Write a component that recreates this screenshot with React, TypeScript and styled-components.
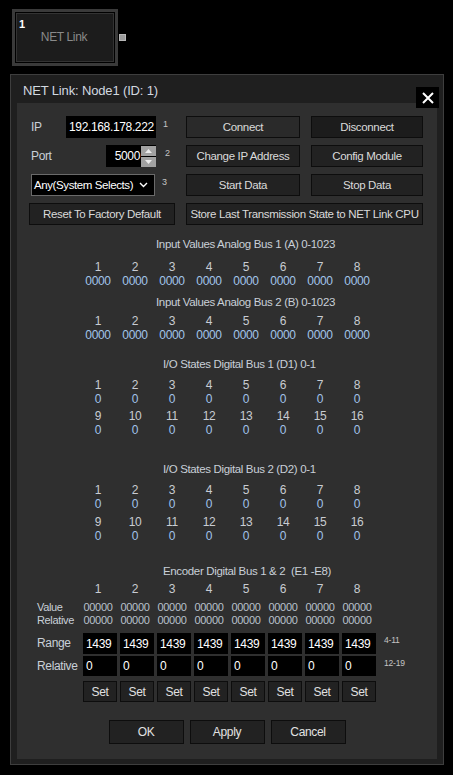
import React from "react";
import styled, { createGlobalStyle } from "styled-components";

// no narrow face is installed, so Liberation Sans is tightened a little
const font = `"Liberation Sans", Arial, sans-serif`;

const GlobalStyle = createGlobalStyle`
  html, body {
    margin: 0;
    padding: 0;
    background: #000;
  }
  body {
    font-family: ${font};
    font-size: 11.5px;
    letter-spacing: -0.35px;
    color: #d6d6d6;
  }
  * {
    box-sizing: border-box;
  }
`;

const Page = styled.div`
  width: 453px;
  height: 775px;
  padding: 9px 0 0 10px;
  background: #000;
  overflow: hidden;
`;

// node on the canvas
const NodeRow = styled.div`
  display: flex;
  align-items: center;
  margin-left: 2px;
`;

const NodeBox = styled.div`
  width: 106px;
  height: 57px;
  border: 3px solid #3a3a3a;
  background: #1c1c1c;
  box-shadow: inset 0 0 0 1px #000, inset 0 0 0 2px #333;
  display: flex;
  flex-direction: column;
  padding: 6px 0 0 4px;
`;

const NodeIndex = styled.div`
  font-weight: bold;
  font-size: 11px;
  line-height: 12px;
  letter-spacing: 0;
  color: #fff;
`;

const NodeName = styled.div`
  text-align: center;
  font-size: 12px;
  line-height: 14px;
  color: #8a8a8a;
  padding-right: 6px;
`;

const PortDot = styled.div`
  width: 7px;
  height: 7px;
  margin-left: 1px;
  background: #9c9c9c;
  border: 1px solid #b8b8b8;
`;

// dialog
const Dialog = styled.div`
  position: relative;
  width: 434px;
  height: 691px;
  margin-top: 8px;
  border: 1px solid #3e3e3e;
  background: #1f1f1f;
  padding: 0 6px 5px 6px;
`;

const TitleBar = styled.div`
  height: 28px;
  display: flex;
  align-items: center;
  padding: 3px 0 0 6px;
  font-size: 13px;
  letter-spacing: -0.15px;
  color: #d2d9e0;
`;

const CloseButton = styled.div`
  position: absolute;
  top: 12px;
  right: 4px;
  width: 23px;
  height: 21px;
  background: #000;
  display: flex;
  align-items: center;
  justify-content: center;
`;

const Panel = styled.div`
  height: 656px;
  background: #2f2f2f;
  padding-top: 13px;
`;

const ControlGrid = styled.div`
  display: grid;
  grid-template-columns: 146px 114px 112px;
  grid-auto-rows: 22px;
  column-gap: 11px;
  row-gap: 7px;
  padding-left: 12px;
`;

const Button = styled.button<{ $span?: number; $tone?: string }>`
  grid-column: span ${(p) => p.$span ?? 1};
  background: ${(p) => p.$tone ?? "#222"};
  border: 1px solid #0d0d0d;
  color: #dadada;
  font: inherit;
  letter-spacing: inherit;
  padding: 0;
  margin: 0;
  white-space: nowrap;
`;

const FieldRow = styled.div`
  display: flex;
  align-items: center;
  padding-left: 2px;
`;

const FieldLabel = styled.span`
  flex: 1;
  font-size: 12px;
  color: #c9d0d8;
`;

const TextBox = styled.div<{ $w: number; $align?: string }>`
  width: ${(p) => p.$w}px;
  height: 22px;
  background: #000;
  color: #fff;
  display: flex;
  align-items: center;
  justify-content: ${(p) => p.$align ?? "flex-start"};
  padding: 0 3px;
  font-size: 12px;
  white-space: nowrap;
`;

const SpinBox = styled.div`
  display: flex;
  flex-direction: column;
  gap: 1px;
  margin-left: 1px;
  margin-right: -3px;
`;

const SpinHalf = styled.div`
  width: 15px;
  height: 10px;
  background: #a2a2a2;
  display: flex;
  align-items: center;
  justify-content: center;
`;

const Sup = styled.span<{ $pad?: number }>`
  width: 19px;
  align-self: flex-start;
  margin-top: 3px;
  padding-left: ${(p) => p.$pad ?? 7}px;
  font-size: 9px;
  line-height: 10px;
  letter-spacing: 0;
  color: #c4c4c4;
`;

const Dropdown = styled.div`
  width: 124px;
  height: 22px;
  border: 1px solid #6a6a6a;
  background: #000;
  display: flex;
  align-items: center;
  justify-content: space-between;
  padding: 0 6px 0 2px;
  color: #fff;
  font-size: 11.5px;
  letter-spacing: -0.4px;
  white-space: nowrap;
`;

// readout sections
const SectionTitle = styled.div<{ $top: number; $indent: number }>`
  margin-top: ${(p) => p.$top}px;
  padding-left: ${(p) => p.$indent}px;
  height: 15px;
  line-height: 15px;
  color: #c9d0d8;
  white-space: pre;
`;

const CellGrid = styled.div<{ $top?: number; $left?: number }>`
  display: grid;
  grid-template-columns: repeat(8, 34px);
  column-gap: 3px;
  margin-top: ${(p) => p.$top ?? 0}px;
  margin-left: ${(p) => p.$left ?? 0}px;
`;

const Cell = styled.div<{ $kind: "num" | "val" | "enc" }>`
  text-align: center;
  line-height: ${(p) => (p.$kind === "enc" ? 12.5 : 14)}px;
  height: ${(p) => (p.$kind === "enc" ? 12.5 : 14)}px;
  font-size: ${(p) => (p.$kind === "enc" ? 11 : 12)}px;
  color: ${(p) =>
    p.$kind === "num" ? "#c8ccd2" : p.$kind === "val" ? "#a2c4ea" : "#b9c1cc"};
`;

const EncRow = styled.div<{ $top: number }>`
  display: flex;
  align-items: flex-start;
  margin-top: ${(p) => p.$top}px;
  padding-left: 20px;
`;

const EncLabels = styled.div<{ $w: number }>`
  width: ${(p) => p.$w}px;
  display: flex;
  flex-direction: column;
  color: #c9d0d8;
`;

const EncLabel = styled.div<{ $h: number; $size?: number }>`
  height: ${(p) => p.$h}px;
  line-height: ${(p) => p.$h}px;
  font-size: ${(p) => p.$size ?? 12}px;
  white-space: nowrap;
`;

const EncBox = styled.div<{ $h: number }>`
  height: ${(p) => p.$h}px;
  background: #000;
  color: #fff;
  font-size: 12px;
  display: flex;
  align-items: center;
  padding-left: 3px;
`;

const SetButton = styled(Button)`
  height: 21px;
  font-size: 12px;
  color: #e0e0e0;
`;

const Hint = styled.span`
  padding-left: 8px;
  margin-top: 2px;
  font-size: 8.5px;
  letter-spacing: -0.2px;
  color: #c4c4c4;
`;

const Footer = styled.div`
  display: flex;
  justify-content: center;
  gap: 6px;
  margin-top: 18px;
`;

const FooterButton = styled(Button)`
  width: 75px;
  height: 24px;
  font-size: 12px;
  color: #e2e2e2;
`;

const eight = [1, 2, 3, 4, 5, 6, 7, 8];
const upper = [9, 10, 11, 12, 13, 14, 15, 16];

const NumBlock: React.FC<{ top: number; labels: number[]; value: string }> = ({
  top,
  labels,
  value,
}) => (
  <CellGrid $top={top} $left={64}>
    {labels.map((n) => (
      <Cell key={`n${n}`} $kind="num">
        {n}
      </Cell>
    ))}
    {labels.map((n) => (
      <Cell key={`v${n}`} $kind="val">
        {value}
      </Cell>
    ))}
  </CellGrid>
);

const Chevron = () => (
  <svg width="9" height="6" viewBox="0 0 9 6">
    <path d="M1 1 L4.5 4.5 L8 1" stroke="#fff" strokeWidth="1.4" fill="none" />
  </svg>
);

const Arrow: React.FC<{ up?: boolean }> = ({ up }) => (
  <svg width="7" height="4" viewBox="0 0 7 4">
    <path d={up ? "M0 4 L3.5 0 L7 4 Z" : "M0 0 L3.5 4 L7 0 Z"} fill="#ececec" />
  </svg>
);

const App: React.FC = () => {
  return (
    <Page>
      <GlobalStyle />
      <NodeRow>
        <NodeBox>
          <NodeIndex>1</NodeIndex>
          <NodeName>NET Link</NodeName>
        </NodeBox>
        <PortDot />
      </NodeRow>

      <Dialog>
        <TitleBar>NET Link: Node1 (ID: 1)</TitleBar>
        <CloseButton>
          <svg width="12" height="12" viewBox="0 0 12 12">
            <path d="M1 1 L11 11 M11 1 L1 11" stroke="#fff" strokeWidth="2" />
          </svg>
        </CloseButton>

        <Panel>
          <ControlGrid>
            <FieldRow>
              <FieldLabel>IP</FieldLabel>
              <TextBox $w={90}>192.168.178.222</TextBox>
              <Sup>1</Sup>
            </FieldRow>
            <Button $tone="#2a2a2a">Connect</Button>
            <Button $tone="#1c1c1c">Disconnect</Button>

            <FieldRow>
              <FieldLabel>Port</FieldLabel>
              <TextBox $w={50} $align="flex-end">
                5000
                <SpinBox>
                  <SpinHalf>
                    <Arrow up />
                  </SpinHalf>
                  <SpinHalf>
                    <Arrow />
                  </SpinHalf>
                </SpinBox>
              </TextBox>
              <Sup $pad={9}>2</Sup>
            </FieldRow>
            <Button>Change IP Address</Button>
            <Button>Config Module</Button>

            <FieldRow>
              <Dropdown>
                Any(System Selects)
                <Chevron />
              </Dropdown>
              <Sup>3</Sup>
            </FieldRow>
            <Button>Start Data</Button>
            <Button>Stop Data</Button>

            <Button>Reset To Factory Default</Button>
            <Button $span={2}>Store Last Transmission State to NET Link CPU</Button>
          </ControlGrid>

          <SectionTitle $top={12} $indent={139}>
            Input Values Analog Bus 1 (A) 0-1023
          </SectionTitle>
          <NumBlock top={8} labels={eight} value="0000" />

          <SectionTitle $top={7} $indent={139}>
            Input Values Analog Bus 2 (B) 0-1023
          </SectionTitle>
          <NumBlock top={4} labels={eight} value="0000" />

          <SectionTitle $top={15} $indent={146}>
            I/O States Digital Bus 1 (D1) 0-1
          </SectionTitle>
          <NumBlock top={6} labels={eight} value="0" />
          <NumBlock top={3} labels={upper} value="0" />

          <SectionTitle $top={25} $indent={146}>
            I/O States Digital Bus 2 (D2) 0-1
          </SectionTitle>
          <NumBlock top={6} labels={eight} value="0" />
          <NumBlock top={4} labels={upper} value="0" />

          <SectionTitle $top={21} $indent={146}>
            {"Encoder Digital Bus 1 & 2  (E1 -E8)"}
          </SectionTitle>
          <EncRow $top={3}>
            <EncLabels $w={44} />
            <CellGrid>
              {eight.map((n) => (
                <Cell key={n} $kind="num">
                  {n}
                </Cell>
              ))}
            </CellGrid>
          </EncRow>
          <EncRow $top={5}>
            <EncLabels $w={44}>
              <EncLabel $h={12.5} $size={11}>
                Value
              </EncLabel>
              <EncLabel $h={12.5} $size={11}>
                Relative
              </EncLabel>
            </EncLabels>
            <CellGrid>
              {eight.map((n) => (
                <Cell key={`a${n}`} $kind="enc">
                  00000
                </Cell>
              ))}
              {eight.map((n) => (
                <Cell key={`b${n}`} $kind="enc">
                  00000
                </Cell>
              ))}
            </CellGrid>
          </EncRow>
          <EncRow $top={7}>
            <EncLabels $w={46}>
              <EncLabel $h={21}>Range</EncLabel>
            </EncLabels>
            <CellGrid>
              {eight.map((n) => (
                <EncBox key={n} $h={21}>
                  1439
                </EncBox>
              ))}
            </CellGrid>
            <Hint>4-11</Hint>
          </EncRow>
          <EncRow $top={2}>
            <EncLabels $w={46}>
              <EncLabel $h={20}>Relative</EncLabel>
            </EncLabels>
            <CellGrid>
              {eight.map((n) => (
                <EncBox key={n} $h={20}>
                  0
                </EncBox>
              ))}
            </CellGrid>
            <Hint>12-19</Hint>
          </EncRow>
          <EncRow $top={5}>
            <EncLabels $w={46} />
            <CellGrid>
              {eight.map((n) => (
                <SetButton key={n}>Set</SetButton>
              ))}
            </CellGrid>
          </EncRow>

          <Footer>
            <FooterButton>OK</FooterButton>
            <FooterButton>Apply</FooterButton>
            <FooterButton>Cancel</FooterButton>
          </Footer>
        </Panel>
      </Dialog>
    </Page>
  );
};

export default App;
